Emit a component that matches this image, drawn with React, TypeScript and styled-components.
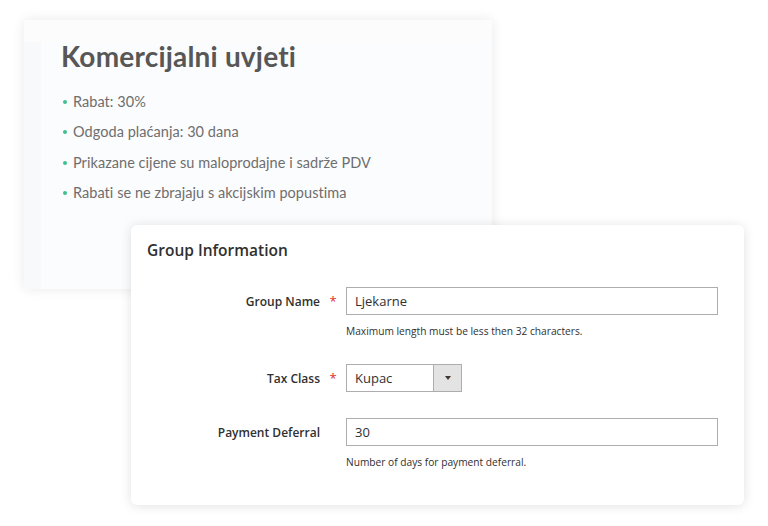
import React from 'react';
import styled, { createGlobalStyle } from 'styled-components';

const GlobalStyle = createGlobalStyle`
  html, body {
    margin: 0;
    padding: 0;
    background: #ffffff;
  }
  * {
    box-sizing: border-box;
  }
`;

const Stage = styled.div`
  width: 768px;
  height: 526px;
  overflow: hidden;
  padding: 20px 0 0 0;
  display: flex;
  flex-direction: column;
  align-items: flex-start;
`;

const TermsCard = styled.section`
  margin-left: 24px;
  width: 468px;
  height: 269px;
  background: #fcfcfd;
  box-shadow: 0 0 12px rgba(0, 0, 0, 0.09);
  padding-top: 22px;
  display: flex;
`;

const TermsBody = styled.div`
  flex: 1;
  border-left: 17px solid #f8f9fa;
  background: #fbfcfd;
  padding: 0 0 0 20px;
`;

const TermsTitle = styled.h2`
  margin: 0;
  font-family: Lato, 'Open Sans', sans-serif;
  font-weight: 700;
  font-size: 28px;
  line-height: 28px;
  color: #575757;
  letter-spacing: 0.2px;
`;

const TermsList = styled.ul`
  list-style: none;
  margin: 23px 0 0 0;
  padding: 0;
  display: flex;
  flex-direction: column;
  gap: 12.4px;
`;

const TermsItem = styled.li`
  display: flex;
  align-items: center;
  gap: 6px;
  font-family: Lato, 'Open Sans', sans-serif;
  font-size: 14.5px;
  line-height: 18px;
  letter-spacing: 0.05px;
  color: #6e6e6e;
  &::before {
    content: '';
    width: 4px;
    height: 4px;
    border-radius: 50%;
    background: #3fbf92;
    margin-left: 2px;
  }
`;

const GroupCard = styled.section`
  position: relative;
  margin: -64px 0 0 131px;
  width: 613px;
  height: 280px;
  background: #ffffff;
  border-radius: 6px;
  box-shadow: 0 1px 12px rgba(0, 0, 0, 0.12);
  padding: 14px 26px 0 16px;
  font-family: 'Open Sans', sans-serif;
  color: #303030;
`;

const GroupTitle = styled.h3`
  margin: 0;
  font-size: 15.5px;
  line-height: 22px;
  font-weight: 600;
  color: #303030;
`;

const Fields = styled.div`
  margin-top: 26px;
  display: flex;
  flex-direction: column;
  gap: 26px;
`;

const Field = styled.div`
  display: grid;
  grid-template-columns: 173px 26px 1fr;
  align-items: center;
  row-gap: 9px;
`;

const Label = styled.label`
  text-align: right;
  font-size: 12px;
  font-weight: 600;
  color: #303030;
`;

const Required = styled.span<{ shown: boolean }>`
  text-align: center;
  color: #e02b27;
  font-size: 13px;
  visibility: ${props => (props.shown ? 'visible' : 'hidden')};
`;

const TextInput = styled.div`
  width: 372px;
  height: 28px;
  border: 1px solid #adadad;
  padding: 0 8px;
  display: flex;
  align-items: center;
  font-size: 13px;
  color: #303030;
  background: #fff;
`;

const Select = styled.div`
  width: 116px;
  height: 28px;
  border: 1px solid #adadad;
  display: flex;
  font-size: 13px;
  color: #303030;
  background: #fff;
`;

const SelectValue = styled.span`
  flex: 1;
  display: flex;
  align-items: center;
  padding: 0 8px;
`;

const SelectArrow = styled.span`
  width: 28px;
  border-left: 1px solid #adadad;
  background: #e3e3e3;
  display: flex;
  align-items: center;
  justify-content: center;
  &::after {
    content: '';
    border-left: 3.5px solid transparent;
    border-right: 3.5px solid transparent;
    border-top: 4px solid #41362f;
  }
`;

const Note = styled.div`
  grid-column: 3;
  font-size: 10.2px;
  line-height: 14px;
  color: #303030;
`;

interface FieldProps {
  label: string;
  required?: boolean;
  note?: string;
  children: React.ReactNode;
}

const FormField = ({ label, required = false, note, children }: FieldProps) => (
  <Field>
    <Label>{label}</Label>
    <Required shown={required}>*</Required>
    {children}
    {note && <Note>{note}</Note>}
  </Field>
);

const terms = [
  'Rabat: 30%',
  'Odgoda plaćanja: 30 dana',
  'Prikazane cijene su maloprodajne i sadrže PDV',
  'Rabati se ne zbrajaju s akcijskim popustima',
];

export default function App() {
  return (
    <>
      <GlobalStyle />
      <Stage>
        <TermsCard>
          <TermsBody>
            <TermsTitle>Komercijalni uvjeti</TermsTitle>
            <TermsList>
              {terms.map(t => (
                <TermsItem key={t}>{t}</TermsItem>
              ))}
            </TermsList>
          </TermsBody>
        </TermsCard>
        <GroupCard>
          <GroupTitle>Group Information</GroupTitle>
          <Fields>
            <FormField label="Group Name" required note="Maximum length must be less then 32 characters.">
              <TextInput>Ljekarne</TextInput>
            </FormField>
            <FormField label="Tax Class" required>
              <Select>
                <SelectValue>Kupac</SelectValue>
                <SelectArrow />
              </Select>
            </FormField>
            <FormField label="Payment Deferral" note="Number of days for payment deferral.">
              <TextInput>30</TextInput>
            </FormField>
          </Fields>
        </GroupCard>
      </Stage>
    </>
  );
}
